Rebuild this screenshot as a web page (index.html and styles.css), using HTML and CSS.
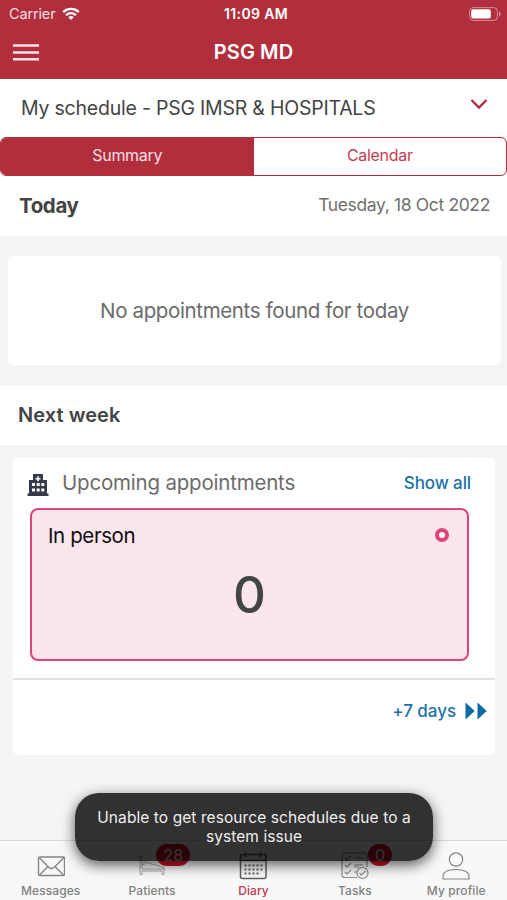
FILE: index.html
```html
<!DOCTYPE html>
<html lang="en">
<head>
<meta charset="utf-8">
<title>PSG MD</title>
<link rel="stylesheet" href="styles.css">
</head>
<body>
<div class="app">
  <header class="top">
    <div class="status">
      <div class="carrier"><span class="carrier-name">Carrier</span>
        <svg width="18" height="14" viewBox="0 0 18 14" fill="none" stroke="#fff" stroke-width="2.3"><path d="M1.2 5.1a11.2 11.2 0 0 1 15.6 0M4.1 8.2a7 7 0 0 1 9.8 0"/><path d="M9 13L6.3 10.3a3.9 3.9 0 0 1 5.4 0Z" fill="#fff" stroke="none"/></svg>
      </div>
      <span class="time">11:09 AM</span>
      <svg class="battery" width="32" height="14" viewBox="0 0 32 14"><rect x=".6" y=".6" width="27.8" height="12.8" rx="3.6" fill="none" stroke="#d98c97"/><rect x="2.2" y="2.3" width="19.6" height="9.3" rx="2" fill="#fff"/><path d="M30 4.6q1.7.7 1.7 2.4T30 9.4Z" fill="#d98c97"/></svg>
    </div>
    <div class="navbar">
      <svg class="menu" width="26" height="17" viewBox="0 0 26 17"><path d="M0 1.5h26M0 8.5h26M0 15.3h26" stroke="#f8e4e6" stroke-width="2.4"/></svg>
      <h1 class="title">PSG MD</h1>
    </div>
  </header>
  <div class="schedule">
    <span class="schedule-name">My schedule - PSG IMSR &amp; HOSPITALS</span>
    <svg width="18" height="12" viewBox="0 0 18 12" fill="none" stroke="#b12f40" stroke-width="2.3"><path d="M1.5 2L9 9.5 16.5 2"/></svg>
  </div>
  <div class="segments"><div class="segment active">Summary</div><div class="segment">Calendar</div></div>
  <div class="today-row"><h2 class="today">Today</h2><span class="date">Tuesday, 18 Oct 2022</span></div>
  <div class="empty"><span>No appointments found for today</span></div>
  <div class="week-row"><h2 class="week">Next week</h2></div>
  <section class="card">
    <div class="card-head">
      <svg width="22" height="22" viewBox="0 0 22 22"><path fill="#353a4b" fill-rule="evenodd" d="M6 0h10v6h4v13.5h1.5V22H.5v-2.500H2V6h4ZM10.200 2.200v1.700H8.500v1.700h1.700v1.700h1.600V5.600h1.700V3.900h-1.700V2.200ZM5 9v3h3V9Zm4.700 0v3h3V9Zm4.600 0v3h3V9ZM5 14.500v3h3v-3Zm4.700 0v3h3v-3Zm4.600 0v3h3v-3Z"/></svg>
      <span class="upcoming">Upcoming appointments</span>
      <a class="show">Show all</a>
    </div>
    <div class="person">
      <div class="person-head"><span class="person-name">In person</span><span class="ring"></span></div>
      <div class="count">0</div>
    </div>
    <div class="more"><span class="days">+7 days</span>
      <svg width="22" height="18" viewBox="0 0 22 18" fill="#0b6ca5"><path d="M.5.500L9.700 9 .5 17.500ZM12.500.500L21.700 9l-9.200 8.500Z"/></svg>
    </div>
  </section>
  <nav class="tabs">
    <div class="tab"><svg width="28" height="30" viewBox="0 0 28 30" fill="none" stroke="#858585" stroke-width="1.400"><rect x="1.500" y="6" width="26" height="18.500" rx="1.500"/><path d="M2.500 7l9.500 9.500q2.500 2 5 0L26.500 7M2.500 24l8.500-8.500M26.500 24l-8.500-8.500"/></svg><span class="messages">Messages</span></div>
    <div class="tab"><svg width="28" height="30" viewBox="0 0 28 30" fill="none" stroke="#a0a0a0" stroke-width=".9"><path d="M2 5v18.500h2V20h20v3.500h2V18H4V5ZM4 14.500l5-3 17 5V18M5 11.500q2.500-3 4 0"/></svg><span class="patients">Patients</span><b class="badge">28</b></div>
    <div class="tab current"><svg width="28" height="30" viewBox="0 0 28 30" fill="none" stroke="#606060" stroke-width="1.500"><rect x="1.500" y="3.500" width="25.500" height="24" rx="2"/><path d="M1 9.500h26M6.500 1v5M21.500 1v5"/><path d="M5.500 14.500h18M5.500 18.500h18M5.500 22.500h14" stroke-width="2.200" stroke-dasharray="2 2"/></svg><span class="diary">Diary</span></div>
    <div class="tab"><svg width="28" height="30" viewBox="0 0 28 30" fill="none" stroke="#8c8c8c" stroke-width="1.200"><path d="M16 26.500H4q-3 0-3-3V5q0-3 3-3h19q3 0 3 3v11"/><path d="M4 7l2 2 4-4M4 14l2 2 4-4M4 21l2 2 4-4M13 7h9M13 14h9M13 16h5M13 21h3"/><circle cx="21.500" cy="22" r="5.500"/><path d="M18.500 22l2 2 4-4"/></svg><span class="tasks">Tasks</span><b class="badge zero">0</b></div>
    <div class="tab"><svg width="28" height="30" viewBox="0 0 28 30" fill="none" stroke="#858585" stroke-width="1.200"><circle cx="14" cy="8.500" r="6.700"/><path d="M1 28v-2.500C1 21 6 18.500 14 18.500s13 2.500 13 7V28Z"/></svg><span class="profile">My profile</span></div>
  </nav>
  <div class="toast"><span class="toast-first">Unable to get resource schedules due to a</span><span class="toast-second">system issue</span></div>
</div>
</body>
</html>
```
FILE: styles.css
```css
* { box-sizing: border-box; }
body { margin: 0; font-family: Inter, Roboto, sans-serif; color: #444; }
h1, h2 { margin: 0; }
svg { display: block; flex: none; }
.app { position: relative; width: 507px; height: 900px; overflow: hidden; display: flex; flex-direction: column; background: #f5f5f5; white-space: nowrap; }
.top { height: 79px; background: #b12f3d; color: #fff; flex: none; }
.status { height: 27px; display: grid; grid-template-columns: 1fr auto 1fr; align-items: center; padding: 0 6px 0 9px; }
.carrier { display: flex; align-items: center; gap: 7px; color: #f8dfe2; font-size: 14.500px; letter-spacing: -.15px; }
.time { font-size: 14px; font-weight: 600; letter-spacing: .35px; padding-left: 2px; }
.battery { justify-self: end; }
.navbar { height: 50px; display: grid; grid-template-columns: 1fr auto 1fr; align-items: center; padding: 0 13px; }
.title { font-size: 20px; font-weight: 600; letter-spacing: .1px; }
.schedule { height: 58px; flex: none; display: flex; justify-content: space-between; align-items: center; padding: 0 19px 0 21px; background: #fff; font-size: 19.500px; letter-spacing: -.22px; }
.schedule-name { margin-top: -1px; }
.schedule svg { margin-top: -9px; }
.segments { height: 39px; flex: none; display: flex; border: 1px solid #b12f3d; border-radius: 6px; background: #fff; box-shadow: 0 0 0 6px #fff; overflow: hidden; }
.segment { flex: 1; display: flex; align-items: center; justify-content: center; font-size: 16px; letter-spacing: -.3px; color: #c43d50; padding-bottom: 3px; }
.active { background: #b12f3d; color: #fbdfe2; }
.today-row { height: 60px; flex: none; display: flex; justify-content: space-between; align-items: center; padding: 0 17px 2px 19px; background: #fff; }
.today { font-size: 20.500px; font-weight: 650; letter-spacing: -.4px; }
.date { font-size: 17.500px; letter-spacing: -.36px; color: #707070; margin-top: -1px; }
.empty { height: 109px; flex: none; margin: 20px 6px 21px 8px; border-radius: 5px; background: #fff; display: flex; align-items: center; justify-content: center; font-size: 20.500px; letter-spacing: -.36px; color: #6c6c6c; }
.week-row { height: 59px; flex: none; display: flex; align-items: center; padding: 0 0 2px 18px; background: #fff; }
.week { font-size: 20px; font-weight: 600; letter-spacing: .05px; }
.card { height: 297px; flex: none; margin: 13px 12px 0 13px; background: #fff; border-radius: 5px; }
.card-head { height: 50px; display: flex; align-items: center; padding: 0 24px 0 14px; }
.card-head svg { margin-top: 3px; }
.upcoming { margin: -2px 0 0 13px; font-size: 20.500px; letter-spacing: -.2px; color: #6c6c6c; }
.show { margin-left: auto; font-size: 17px; letter-spacing: -.1px; font-weight: 500; color: #1d72a8; }
.person { height: 153px; margin: 0 26px 0 17px; border: 2px solid #df4478; border-radius: 8px; background: #fbe6ed; }
.person-head { height: 50px; display: flex; justify-content: space-between; align-items: center; padding: 0 18px 0 16px; }
.person-name { font-size: 20.500px; letter-spacing: -.4px; color: #110c0e; }
.ring { width: 14px; height: 14px; border: 4px solid #df4478; border-radius: 50%; background: #fff; margin-top: -1px; }
.count { font-size: 51px; font-weight: 450; line-height: 70px; text-align: center; }
.more { height: 77px; margin-top: 17px; border-top: 2px solid #e3e3e3; display: flex; justify-content: flex-end; align-items: center; gap: 9px; padding: 0 8px 14px 0; color: #1d72a8; font-size: 17px; font-weight: 500; letter-spacing: -.05px; }
.tabs { height: 60px; flex: none; margin-top: auto; border-top: 1px solid #d8d8d8; background: #f8f8f8; display: grid; grid-template-columns: repeat(5, 1fr); }
.tab { position: relative; display: flex; flex-direction: column; align-items: center; padding-top: 10px; font-size: 12px; font-weight: 500; letter-spacing: .1px; color: #808080; gap: 2px; }
.current { color: #c23a52; }
.badge { position: absolute; left: 55px; top: 3px; min-width: 34px; height: 22px; border-radius: 11px; background: #d0132d; color: #fff; font-size: 16px; font-weight: 400; line-height: 22px; text-align: center; }
.zero { left: 64px; min-width: 24px; }
.toast { position: absolute; left: 75px; top: 793px; width: 358px; height: 68px; border-radius: 24px; background: rgba(0, 0, 0, .8); box-shadow: 0 4px 14px rgba(0, 0, 0, .65); color: #eee; font-size: 15.500px; letter-spacing: .08px; line-height: 19px; display: flex; flex-direction: column; align-items: center; justify-content: center; }
```
